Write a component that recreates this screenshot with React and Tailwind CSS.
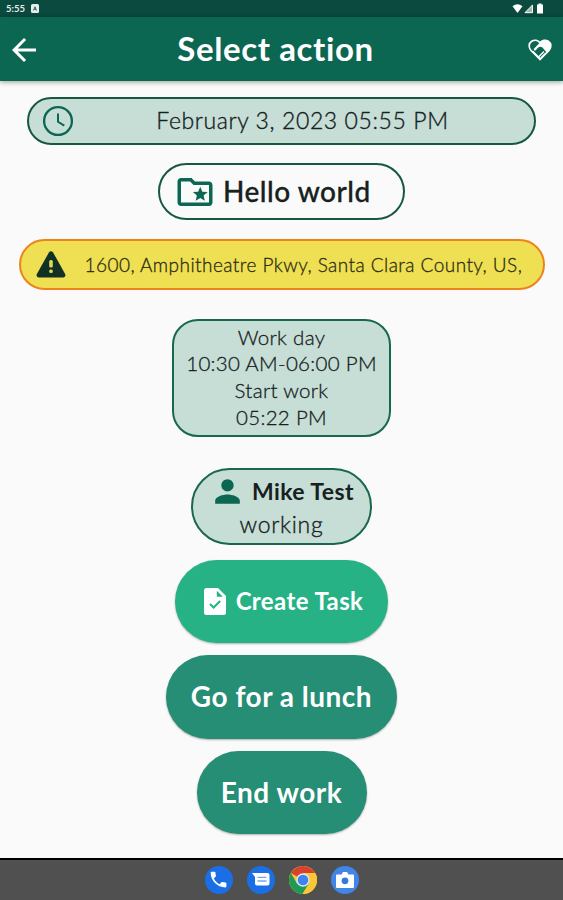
import React from 'react';
import { MdArrowBack, MdOutlineFolderSpecial, MdPerson, MdPhone } from 'react-icons/md';
import { clsx } from 'clsx';

const StatusBar = () => (
    <div className="h-[17px] shrink-0 bg-[#0b4a3e] flex items-center justify-between pl-[6px] pr-[18px] text-[#e6efec]">
        <div className="flex items-center gap-[5px]">
            <span className="w-[20px] text-[9.5px] leading-none font-bold">5:55</span>
            <svg width="8" height="9" viewBox="0 0 8 9">
                <rect width="8" height="9" rx="1.5" fill="currentColor" />
                <path d="M2.5 6.5 4 2.8l1.5 3.7M3 5.3h2" fill="none" stroke="#0b4a3e" strokeWidth="0.8" />
            </svg>
        </div>
        <svg width="33" height="11" viewBox="0 0 33 11" fill="#fff">
            <path d="M0.5 3.2Q5.5-.8 10.5 3.2L5.5 10z" />
            <path d="M12.5 10 21 1.2V10z" fill="#9fb9b2" />
            <path d="M13 9.7 20.5 2v7.7z" fill="none" stroke="#fff" strokeWidth="0.9" />
            <path d="M25 1.5h1.5V.5h3v1H31v9h-6z" />
        </svg>
    </div>
);

const HeartIcon = () => (
    <svg width="24" height="22" viewBox="0 0 24 22" fill="none">
        <path
            d="M12 20.500 3 11.500C.2 8.300.7 4.300 3.700 2.300 6.500.500 10 1.200 12 3.800 14 1.200 17.500.500 20.300 2.300c3 2 3.500 6 .7 9.200z"
            stroke="#fff"
            strokeWidth="1.700"
        />
        {/* Upper hand */}
        <path
            d="M12 3.500C14 1.200 17.500.500 20.300 2.300c3 2 3.500 6 .7 9.200l-2.200 2.200-4.300-5.200q-2.500-1.800-4.500.3l-2.500 2.700q-1.800.5-1.800-1.500z"
            fill="#fff"
        />
        {/* Fingers */}
        <path d="m4.500 12 7.500 7.500M16 12.500l-5 5M17.800 14l-5 5" stroke="#fff" strokeWidth="1.400" />
    </svg>
);

const ClockIcon = () => (
    <svg className="ml-[13px] shrink-0" width="32" height="32" viewBox="0 0 32 32" fill="none" stroke="#0b6652">
        <circle cx="16" cy="16" r="13.9" strokeWidth="2.3" />
        <path d="M16 8.5v8.3l6.3 3.9" strokeWidth="2" />
    </svg>
);

const WarningIcon = () => (
    <svg className="shrink-0" width="30" height="27" viewBox="0 0 30 27">
        <path
            d="M12.9 1.5q2.100-2.600 4.200 0L29 22.800q1.300 3-1.600 3.700H2.600Q-.3 25.800 1 22.800z"
            fill="#123125"
        />
        <rect x="13.200" y="9" width="3.600" height="7.600" rx="1.500" fill="#e3d957" />
        <rect x="13.200" y="18.500" width="3.600" height="3.600" rx="1.500" fill="#e3d957" />
    </svg>
);

const TaskIcon = () => (
    <svg className="shrink-0" width="22" height="27" viewBox="0 0 22 27">
        <path d="M2.5 0H14l8 8v16.5q0 2.500-2.500 2.500h-17Q0 27 0 24.500v-22Q0 0 2.500 0z" fill="#fff" />
        <path d="M12.800 2.800v6h6z" fill="#27b286" />
        <path d="m6 16 3.600 3.500 6.600-6.500" fill="none" stroke="#27b286" strokeWidth="2" />
    </svg>
);

const AppBar = () => (
    <header className="relative z-10 h-[64px] shrink-0 bg-[#0b6652] text-white shadow-[0_1px_5px_rgba(0,0,0,0.4)] grid grid-cols-[50px_1fr_50px] items-center">
        <MdArrowBack size={36} className="ml-[6px] mt-[2px]" />
        <h1 className="text-center text-[33px] leading-none font-bold pb-px pr-[12px] tracking-[0.6px] whitespace-nowrap">
            Select action
        </h1>
        <div className="pl-[15px] pt-px">
            <HeartIcon />
        </div>
    </header>
);

const ActionButton = ({ className, children }) => (
    <button
        className={clsx(
            'rounded-full text-white font-bold flex items-center justify-center shadow-[0_1px_2px_rgba(0,0,0,0.3)]',
            className
        )}
    >
        {children}
    </button>
);

const ChromeIcon = () => (
    <svg width="28" height="28" viewBox="0 0 28 28">
        <circle cx="14" cy="14" r="14" fill="#fbc735" />
        <path d="M14 14 1.88 7A14 14 0 0 1 26.12 7z" fill="#d9412f" />
        <path d="M1.88 7A14 14 0 0 0 13.5 28L20 17.5 14 14 8 17.5z" fill="#1e9a55" />
        <path d="M14 7h12.12A14 14 0 0 1 13.5 28L20 17.5z" fill="#fbc735" />
        <circle cx="14" cy="14" r="6.7" fill="#dfe7f2" />
        <circle cx="14" cy="14" r="5.3" fill="#3f83ee" />
    </svg>
);

const Dock = () => (
    <footer className="h-[42px] shrink-0 border-t-2 border-black bg-[#505050] flex items-center justify-center gap-[14px] pb-px">
        <div className="size-[28px] rounded-full bg-[#1a6fe6] text-white flex items-center justify-center">
            <MdPhone size={21} />
        </div>
        <div className="size-[28px] rounded-full bg-[#1a6fe6] flex items-center justify-center">
            <svg width="18" height="13" viewBox="0 0 18 13">
                <path d="M0 0h15.5Q17.5 0 17.5 2v8.5q0 2-2 2H5q-2 0-2-2V4z" fill="#fff" />
                <path d="M5.5 4.3h9M5.5 8h9" stroke="#75a8f0" strokeWidth="1.3" />
            </svg>
        </div>
        <ChromeIcon />
        <div className="size-[28px] rounded-full bg-[#4285e8] flex items-center justify-center">
            <svg width="18" height="16" viewBox="0 0 18 16">
                <path d="M1 2.5h4.5L7 0h4l1.5 2.5H17q1 0 1 1V15q0 1-1 1H1q-1 0-1-1V3.5q0-1 1-1z" fill="#fff" />
                <circle cx="9" cy="8.8" r="3.4" fill="#3479dc" />
            </svg>
        </div>
    </footer>
);

const App = () => {
    return (
        <div className="h-screen w-full overflow-hidden bg-[#fafafa] text-[#17211e] flex flex-col font-['Lato',sans-serif]">
            <StatusBar />
            <AppBar />

            <main className="flex-1 flex flex-col items-center pt-[16px]">
                {/* Current date */}
                <div className="w-[509px] h-[48px] rounded-full border-2 border-[#17583f] bg-[#c6ded6] flex items-center">
                    <ClockIcon />
                    <span className="flex-1 pl-[45px] pr-[48px] pb-[2px] text-center whitespace-nowrap text-[23px] leading-none font-light tracking-[0.6px] [-webkit-text-stroke:0.35px]">
                        February 3, 2023 05:55 PM
                    </span>
                </div>

                {/* Project */}
                <div className="mt-[18px] w-[247px] h-[57px] rounded-full border-2 border-[#17583f] flex items-center pl-[14px]">
                    <MdOutlineFolderSpecial size={42} className="shrink-0 text-[#0b6652]" />
                    <span className="ml-[7px] pb-[2px] whitespace-nowrap text-[28px] leading-none font-medium tracking-[0.5px] [-webkit-text-stroke:0.3px]">
                        Hello world
                    </span>
                </div>

                {/* Location warning */}
                <div className="mt-[19px] w-[526px] h-[51px] rounded-full border-2 border-[#ed831c] bg-[#eee052] flex items-center pl-[15px]">
                    <WarningIcon />
                    <span className="ml-[19px] pb-px whitespace-nowrap text-[19px] leading-none font-light text-[#2d2c13] tracking-[0.45px] [-webkit-text-stroke:0.3px]">
                        1600, Amphitheatre Pkwy, Santa Clara County, US,
                    </span>
                </div>

                {/* Work day */}
                <div className="mt-[29px] w-[219px] h-[118px] rounded-[26px] border-2 border-[#17684f] bg-[#c6ded6] flex flex-col items-center justify-center pb-[2px] text-[20.5px] leading-[26.7px] font-light tracking-[0.3px] whitespace-nowrap [-webkit-text-stroke:0.3px]">
                    <span>Work day</span>
                    <span>10:30 AM-06:00 PM</span>
                    <span>Start work</span>
                    <span>05:22 PM</span>
                </div>

                {/* Employee */}
                <div className="mt-[31px] w-[181px] h-[77px] rounded-full border-2 border-[#17684f] bg-[#c6ded6] flex flex-col items-center whitespace-nowrap">
                    <div className="h-[38px] pt-[5px] flex items-center gap-[6px]">
                        <MdPerson size={37} className="text-[#0b6652]" />
                        <span className="text-[23px] leading-none font-bold tracking-[0.4px]">Mike Test</span>
                    </div>
                    <span className="text-[23px] leading-[32px] font-light tracking-[0.7px] [-webkit-text-stroke:0.35px]">
                        working
                    </span>
                </div>

                <ActionButton className="mt-[15px] w-[213px] h-[83px] bg-[#27b286] text-[24px] gap-[10px] pl-[4px] pb-px tracking-[0.4px]">
                    <TaskIcon />
                    <span>Create Task</span>
                </ActionButton>
                <ActionButton className="mt-[12px] w-[231px] h-[84px] bg-[#258e74] text-[28px] tracking-[0.5px] pb-[2px]">
                    Go for a lunch
                </ActionButton>
                <ActionButton className="mt-[12px] w-[170px] h-[83px] bg-[#258e74] text-[28px] tracking-[0.5px] pb-[2px]">
                    End work
                </ActionButton>
            </main>

            <Dock />
        </div>
    );
};

export default App;
